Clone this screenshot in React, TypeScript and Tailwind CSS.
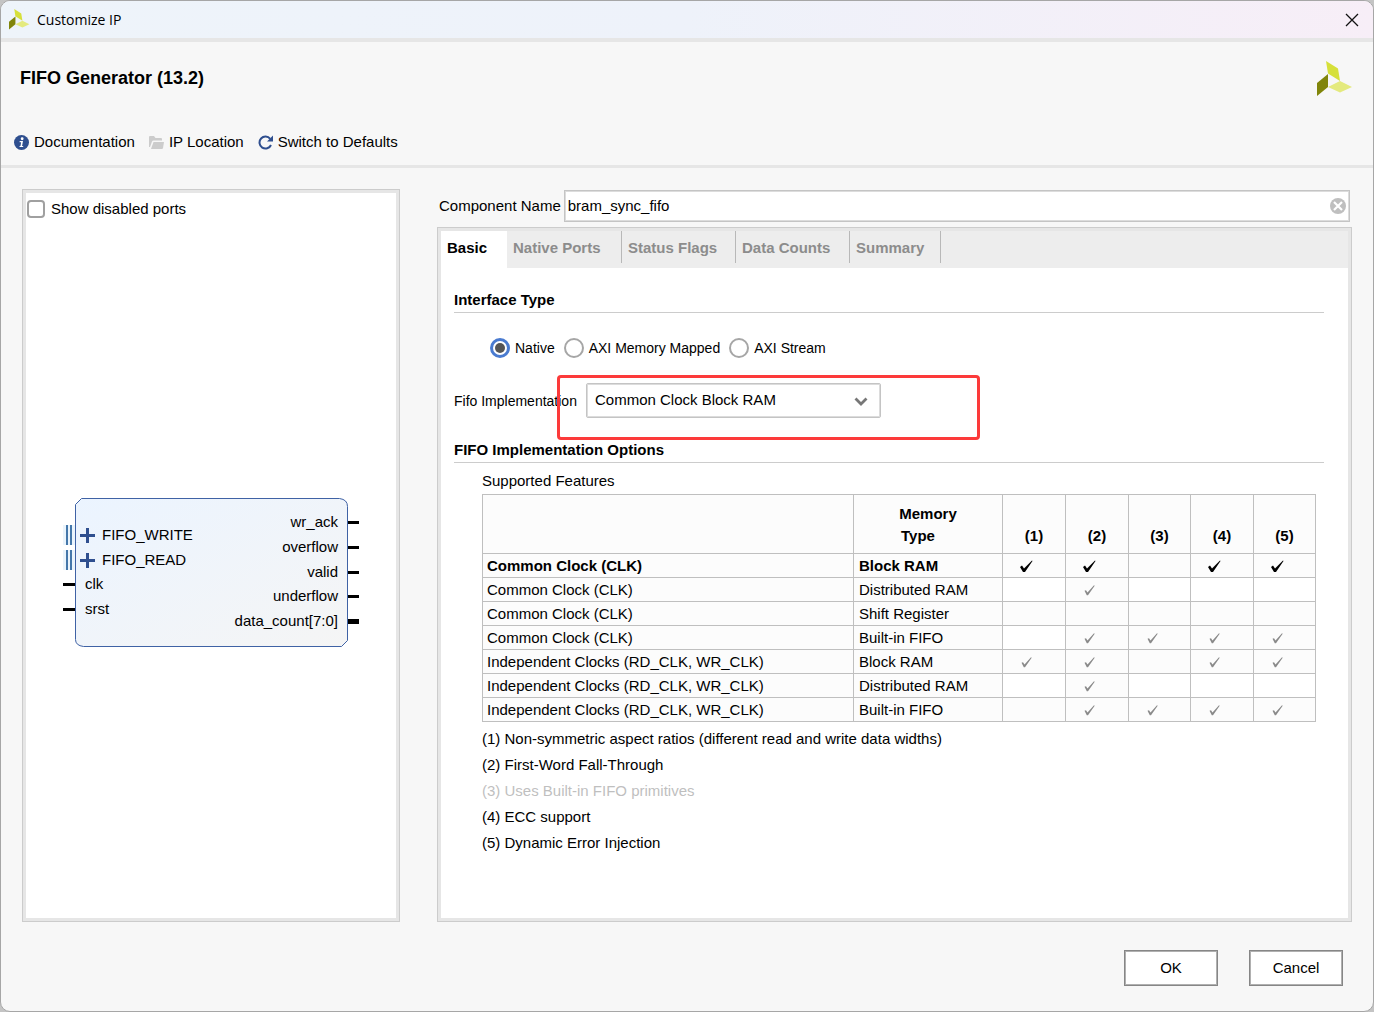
import { Fragment, useState } from "react";

type FeatureRow = {
  clock: string;
  memory: string;
  features: number[];
};

const TABS = [
  { name: "Basic", width: "w-[66px]" },
  { name: "Native Ports", width: "w-[115px]" },
  { name: "Status Flags", width: "w-[114px]" },
  { name: "Data Counts", width: "w-[114px]" },
  { name: "Summary", width: "w-[91px]" },
];

const INTERFACES = ["Native", "AXI Memory Mapped", "AXI Stream"];

const IMPLEMENTATIONS = [
  "Common Clock Block RAM",
  "Common Clock Distributed RAM",
  "Common Clock Shift Register",
  "Common Clock Builtin FIFO",
  "Independent Clocks Block RAM",
  "Independent Clocks Distributed RAM",
  "Independent Clocks Builtin FIFO",
];

const COLUMNS = [1, 2, 3, 4, 5];

const INDEPENDENT = "Independent Clocks (RD_CLK, WR_CLK)";

const ROWS: FeatureRow[] = [
  { clock: "Common Clock (CLK)", memory: "Block RAM", features: [1, 2, 4, 5] },
  { clock: "Common Clock (CLK)", memory: "Distributed RAM", features: [2] },
  { clock: "Common Clock (CLK)", memory: "Shift Register", features: [] },
  {
    clock: "Common Clock (CLK)",
    memory: "Built-in FIFO",
    features: [2, 3, 4, 5],
  },
  { clock: INDEPENDENT, memory: "Block RAM", features: [1, 2, 4, 5] },
  { clock: INDEPENDENT, memory: "Distributed RAM", features: [2] },
  { clock: INDEPENDENT, memory: "Built-in FIFO", features: [2, 3, 4, 5] },
];

const NOTES = [
  "(1) Non-symmetric aspect ratios (different read and write data widths)",
  "(2) First-Word Fall-Through",
  "(3) Uses Built-in FIFO primitives",
  "(4) ECC support",
  "(5) Dynamic Error Injection",
];

export default function App() {
  return (
    <div className="min-h-screen bg-[#c4c4c4] font-['Liberation_Sans',Arial,sans-serif] text-[15px] leading-5 text-black">
      <div className="flex min-h-screen flex-col overflow-hidden rounded-[10px] border border-[#a6a6a6] bg-[#f7f7f7]">
        <TitleBar />
        <Header />
        <main className="flex grow gap-[37px] pt-[21px] pr-[21px] pl-[21px]">
          <PortsPanel />
          <Settings />
        </main>
        <footer className="flex justify-end gap-[31px] px-[30px] pt-7 pb-[25px]">
          <DialogButton label="OK" />
          <DialogButton label="Cancel" />
        </footer>
      </div>
    </div>
  );
}

const TitleBar = () => (
  <div className="flex h-[41px] items-center border-b-4 border-[#e6e6e6] bg-linear-to-r from-[#eef4fa] via-[#eef2fa] to-[#f7eef7] pr-[14px] pl-2">
    <Logo className="size-[21px]" />
    <span className="ml-[7px] font-['Open_Sans','Noto_Sans',sans-serif] text-sm">
      Customize IP
    </span>
    <button type="button" aria-label="Close" className="ml-auto">
      <svg viewBox="0 0 14 14" className="size-[14px]">
        <path d="M1 1 13 13M13 1 1 13" stroke="#111" strokeWidth="1.3" />
      </svg>
    </button>
  </div>
);

const Header = () => (
  <header className="border-b-3 border-[#e6e6e6] pb-[13px]">
    <div className="flex items-start justify-between pt-[19px] pr-5 pl-[19px]">
      <h1 className="pt-[5px] text-lg leading-6 font-bold">
        FIFO Generator (13.2)
      </h1>
      <Logo className="size-9" />
    </div>
    <nav className="mt-[35px] flex items-center gap-[14px] pl-[13px]">
      <button type="button" className="flex items-center gap-[5px]">
        <svg viewBox="0 0 16 16" className="mt-px size-[15px]">
          <circle cx="8" cy="8" r="8" fill="#2f4f8f" />
          <circle cx="8.7" cy="4" r="1.5" fill="#fff" />
          <path
            d="M6 6.5h3.6L8.6 11.6h1.2v1.1H5.9v-1.1h1L7.6 7.7H6z"
            fill="#fff"
          />
        </svg>
        Documentation
      </button>
      <button type="button" className="flex items-center gap-[5px]">
        <svg viewBox="0 0 15 13" className="mt-px h-[13px] w-[15px]" fill="#ccc">
          <path d="M0 1Q0 0 1 0H5L6.5 2H12Q13 2 13 3V4.5H4.5Q3.5 4.5 3 5.5L1 11H0Z" />
          <path d="M4.5 6H15L14 12Q13.7 13 13 13H2Z" />
        </svg>
        IP Location
      </button>
      <button type="button" className="flex items-center gap-[5px]">
        <svg viewBox="0 0 15 15" className="mt-px size-[15px]" fill="none">
          <path
            d="M12.2 3.8A6 6 0 1 0 13 10"
            stroke="#2f4f8f"
            strokeWidth="2"
          />
          <path d="M15 .5V6.5H9Z" fill="#2f4f8f" />
        </svg>
        Switch to Defaults
      </button>
    </nav>
  </header>
);

const PortsPanel = () => (
  <section className="w-[378px] shrink-0 border border-[#ccc]">
    <div className="flex h-full flex-col border-3 border-[#e6e6e6] bg-white">
      <label className="flex items-center gap-[6px] pt-[6px] pl-px">
        <input
          type="checkbox"
          className="size-[18px] appearance-none rounded-[4px] border-2 border-[#a0a0a0] bg-white"
        />
        Show disabled ports
      </label>
      <div className="flex grow items-center justify-center pt-[7px]">
        <BlockSymbol />
      </div>
    </div>
  </section>
);

const BlockSymbol = () => {
  const buses = [
    { name: "FIFO_WRITE", y: 37 },
    { name: "FIFO_READ", y: 62 },
  ];
  const inputs = [
    { name: "clk", y: 86 },
    { name: "srst", y: 111 },
  ];
  const outputs = [
    { name: "wr_ack", y: 24 },
    { name: "overflow", y: 49 },
    { name: "valid", y: 74 },
    { name: "underflow", y: 98 },
    { name: "data_count[7:0]", y: 123, bus: true },
  ];

  return (
    <svg viewBox="0 0 296 149" className="h-[149px] w-[296px] text-[15px]">
      <defs>
        <linearGradient id="block" x1="0" y1="0" x2="1" y2="1">
          <stop offset="0" stopColor="#ebf4ff" />
          <stop offset="1" stopColor="#f5f5f5" />
        </linearGradient>
      </defs>
      <path
        d="M18.5 .5H276.5Q284.5 1.5 284.5 8.5V142.5L278.5 148.5H20.5Q12.5 147.5 12.5 141.5V6.5Z"
        fill="url(#block)"
        stroke="#3f62a5"
      />
      {buses.map(({ name, y }) => (
        <Fragment key={name}>
          <rect x="0" y={y - 10} width="12" height="20" fill="#eaf4fc" />
          <path
            d={`M4 ${y - 10}v20M8 ${y - 10}v20`}
            stroke="#4477aa"
            strokeWidth="2"
          />
          <path
            d={`M17 ${y + 0.5}h15M24.5 ${y - 7}v15`}
            stroke="#2f4f8f"
            strokeWidth="3"
          />
          <text x="39" y={y + 5}>
            {name}
          </text>
        </Fragment>
      ))}
      {inputs.map(({ name, y }) => (
        <Fragment key={name}>
          <rect x="0" y={y - 1} width="12" height="3" />
          <text x="22" y={y + 5}>
            {name}
          </text>
        </Fragment>
      ))}
      {outputs.map(({ name, y, bus }) => (
        <Fragment key={name}>
          <rect
            x="285"
            y={bus ? y - 2 : y - 1}
            width="11"
            height={bus ? 5 : 3}
          />
          <text x="275" y={y + 5} textAnchor="end">
            {name}
          </text>
        </Fragment>
      ))}
    </svg>
  );
};

const Settings = () => {
  const [tab, setTab] = useState("Basic");

  return (
    <section className="flex min-w-0 grow flex-col">
      <div className="mt-px flex items-center gap-[3px] pr-[2px] pl-[2px]">
        <label htmlFor="component-name">Component Name</label>
        <div className="flex h-8 grow items-center border border-[#c4c4c4] bg-white pr-[3px] inset-ring inset-ring-[#dcdcdc]">
          <input
            id="component-name"
            type="text"
            defaultValue="bram_sync_fifo"
            className="min-w-0 grow pl-[3px] outline-none"
          />
          <button type="button" aria-label="Clear">
            <svg viewBox="0 0 16 16" className="size-4">
              <circle cx="8" cy="8" r="8" fill="#bfbfbf" />
              <path
                d="M4 4 12 12M12 4 4 12"
                stroke="#fff"
                strokeWidth="2.2"
              />
            </svg>
          </button>
        </div>
      </div>

      <div className="mt-[5px] flex grow flex-col border border-[#ccc]">
        <div className="grow border-3 border-[#e6e6e6] bg-white">
          <div role="tablist" className="flex h-[37px] items-start bg-[#ededed]">
            {TABS.map(({ name, width }) => (
              <button
                key={name}
                type="button"
                role="tab"
                aria-selected={tab === name}
                onClick={() => setTab(name)}
                className={`${width} pl-[6px] text-left font-bold whitespace-nowrap ${
                  tab === name
                    ? "h-[37px] bg-white pb-1 text-black"
                    : "h-8 border-r border-[#b8b8b8] pt-[2px] text-[#8c8c8c]"
                }`}
              >
                {name}
              </button>
            ))}
          </div>
          <BasicTab />
        </div>
      </div>
    </section>
  );
};

const SectionTitle = ({ title }: { title: string }) => (
  <h2 className="h-6 border-b border-[#ccc] leading-[22px] font-bold">
    {title}
  </h2>
);

const BasicTab = () => {
  const [selected, setSelected] = useState("Native");

  return (
    <div className="pt-[21px] pr-6 pb-10 pl-[13px]">
      <SectionTitle title="Interface Type" />
      <div className="mt-[25px] flex items-center gap-[9px] pl-9 text-sm">
        {INTERFACES.map((name) => (
          <label key={name} className="flex items-center gap-[5px]">
            <input
              type="radio"
              name="interface"
              checked={selected === name}
              onChange={() => setSelected(name)}
              className="size-5 appearance-none rounded-full border-2 border-[#a6a6a6] bg-white checked:border-3 checked:border-[#4a7bd0] checked:bg-[#555] checked:bg-clip-content checked:p-[2px]"
            />
            {name}
          </label>
        ))}
      </div>

      <div className="relative mt-[25px] flex items-center">
        <label htmlFor="implementation" className="w-[132px] text-sm">
          Fifo Implementation
        </label>
        <div className="relative">
          <select
            id="implementation"
            className="h-[35px] w-[295px] appearance-none rounded-[2px] border border-[#c4c4c4] bg-white pb-[2px] pl-2 outline-none inset-ring inset-ring-[#dcdcdc]"
          >
            {IMPLEMENTATIONS.map((name) => (
              <option key={name}>{name}</option>
            ))}
          </select>
          <svg
            viewBox="0 0 14 9"
            className="pointer-events-none absolute top-[14px] right-[13px] h-[9px] w-[14px]"
          >
            <path
              d="M1.5 1.5 7 7 12.5 1.5"
              fill="none"
              stroke="#777"
              strokeWidth="2.8"
            />
          </svg>
        </div>
        {/* Highlight around the implementation choice */}
        <div className="pointer-events-none absolute -top-2 left-[103px] h-[65px] w-[423px] rounded-[4px] border-3 border-[#fc3a3a]" />
      </div>

      <div className="mt-[21px]">
        <SectionTitle title="FIFO Implementation Options" />
      </div>
      <div className="pt-2 pr-2 pl-7">
        <p>Supported Features</p>
        <FeatureTable />
        <ul className="mt-1">
          {NOTES.map((note) => (
            <li
              key={note}
              className={`leading-[26px] ${note.startsWith("(3)") ? "text-[#bfbfbf]" : ""}`}
            >
              {note}
            </li>
          ))}
        </ul>
      </div>
    </div>
  );
};

const FeatureTable = () => (
  <table className="mt-[3px] w-full table-fixed border-collapse bg-[#fcfcfc] [&_td]:border [&_td]:border-[#bfbfbf] [&_td]:pt-px [&_th]:border [&_th]:border-[#bfbfbf]">
    <colgroup>
      <col />
      <col className="w-[149px]" />
      <col className="w-[63px]" />
      <col className="w-[63px]" />
      <col className="w-[62px]" />
      <col className="w-[63px]" />
      <col className="w-[62px]" />
    </colgroup>
    <thead>
      <tr className="h-[59px] align-bottom leading-[22px]">
        <th />
        <th className="pb-[6px] text-center">
          Memory
          <span className="block pr-5">Type</span>
        </th>
        {COLUMNS.map((n) => (
          <th key={n} className="pb-[6px] text-center">
            ({n})
          </th>
        ))}
      </tr>
    </thead>
    <tbody>
      {ROWS.map((row, index) => (
        <tr
          key={row.clock + row.memory}
          className={`h-6 ${index === 0 ? "font-bold" : ""}`}
        >
          <td className="pl-1">{row.clock}</td>
          <td className="pl-[5px]">{row.memory}</td>
          {COLUMNS.map((n) => {
            const supported = row.features.includes(n);
            return (
              <td
                key={n}
                className={`pl-[17px] ${index % 2 === 1 && !supported ? "bg-white" : ""}`}
              >
                {supported && <Check active={index === 0} />}
              </td>
            );
          })}
        </tr>
      ))}
    </tbody>
  </table>
);

const Check = ({ active }: { active: boolean }) =>
  active ? (
    <svg viewBox="0 0 13 13" className="h-[13px] w-[13px]">
      <path d="M0 7 2 5.5 4 8.5 12 .5 12.5 1 5 12H3Z" fill="#000" />
    </svg>
  ) : (
    <svg viewBox="0 0 13 13" className="h-[13px] w-[13px]">
      <path
        d="M1.5 6.8 3 6.2 4.5 8.5 11 1.2 11.7 1.8 5 11.2H3.8Z"
        fill="#8a8a8a"
      />
    </svg>
  );

const DialogButton = ({ label }: { label: string }) => (
  <button
    type="button"
    className="h-9 w-[94px] border border-[#868686] bg-white inset-ring inset-ring-[#b0b0b0]"
  >
    {label}
  </button>
);

const Logo = ({ className }: { className: string }) => (
  <svg viewBox="0 0 36 36" className={className}>
    <path d="M9 0 21 7.5 23 20 11 12.5Z" fill="#d6e03a" />
    <path d="M0 22 11 13V26L0 35Z" fill="#80850a" />
    <path d="M11 26 23 20 35 26 23 31.5Z" fill="#e4ea7e" />
  </svg>
);
